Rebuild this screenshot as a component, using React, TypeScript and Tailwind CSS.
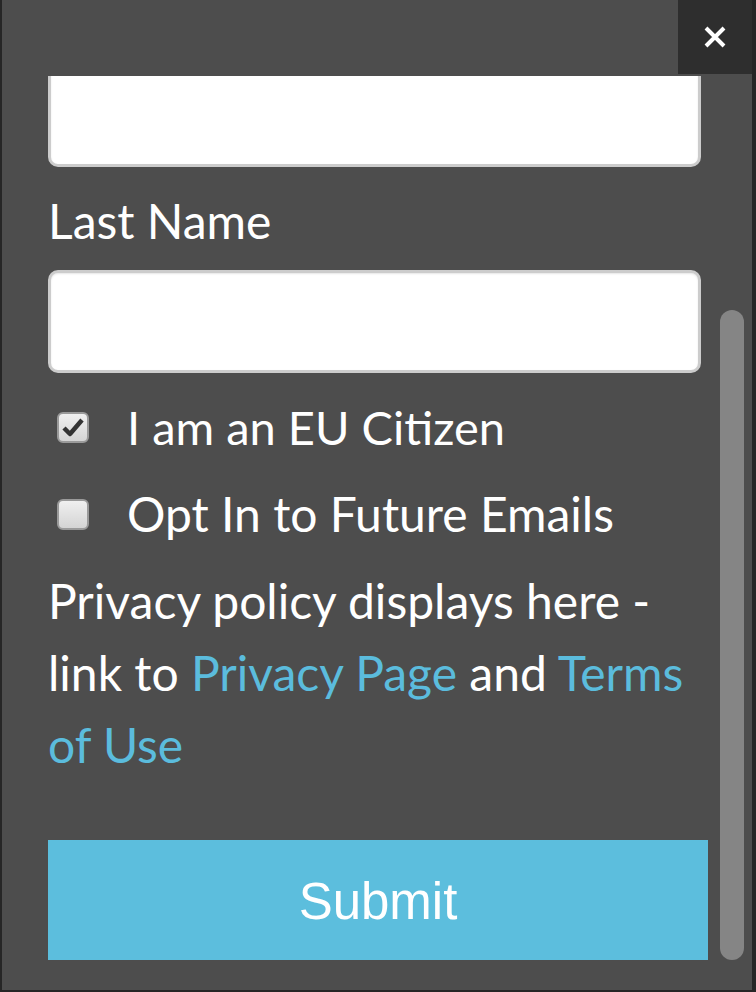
import { useState } from 'react';

function Checkbox({ checked }: { checked: boolean }) {
  return (
    <span className="ml-[9px] flex h-[31px] w-[32px] shrink-0 items-center justify-center rounded-[6px] border-[2px] border-[#9a9a9a] bg-gradient-to-b from-[#f0f0f0] to-[#d4d4d4]">
      {checked && (
        <svg width="22" height="20" viewBox="0 0 22 20">
          <path d="M2 11 L8 17 L20 3" fill="none" stroke="#333" strokeWidth="4.5" strokeLinejoin="round" />
        </svg>
      )}
    </span>
  );
}

export default function App() {
  const [eu, setEu] = useState(true);
  const [optIn, setOptIn] = useState(false);

  return (
    <div className="h-[992px] w-[756px] bg-[#262626] pb-[2px] pl-[2px] pr-[4px]" style={{ fontFamily: 'Lato, "Open Sans", sans-serif' }}>
      <div className="relative flex h-full flex-col bg-[#4d4d4d]">
        <div className="h-[76px] shrink-0" />
        <button className="absolute right-0 top-0 flex h-[74px] w-[74px] items-center justify-center bg-[#2e2e2e]">
          <svg width="22" height="22" viewBox="0 0 22 22">
            <path d="M2 2 L20 20 M20 2 L2 20" stroke="#fff" strokeWidth="4" />
          </svg>
        </button>

        <div className="flex min-h-0 flex-1 overflow-hidden">
          <div className="flex flex-1 flex-col pl-[46px] text-white">
            <div className="-mt-[12px] h-[103px] w-[653px] shrink-0 rounded-[10px] border-[3px] border-[#cccccc] bg-white shadow-[inset_0_1px_2px_rgba(0,0,0,0.1)]" />

            <label className="mt-[18px] text-[48px] leading-[72px]">Last Name</label>
            <div className="mt-[13px] h-[103px] w-[653px] shrink-0 rounded-[10px] border-[3px] border-[#cccccc] bg-white shadow-[inset_0_1px_2px_rgba(0,0,0,0.1)]" />

            <div className="mt-[18px] flex items-center text-[47px] leading-[72px]" onClick={() => setEu(!eu)}>
              <Checkbox checked={eu} />
              <span className="ml-[38px]">I am an EU Citizen</span>
            </div>
            <div className="mt-[15px] flex items-center text-[48px] leading-[72px]" onClick={() => setOptIn(!optIn)}>
              <Checkbox checked={optIn} />
              <span className="ml-[38px]">Opt In to Future Emails</span>
            </div>

            <p className="mt-[15px] w-[660px] text-[48px] leading-[72px]">
              Privacy policy displays here - link to <a className="text-[#5bbcdd]">Privacy Page</a> and{' '}
              <a className="text-[#5bbcdd]">Terms of Use</a>
            </p>

            <button
              className="mt-[59px] h-[120px] w-[660px] shrink-0 bg-[#5cbedd] pt-[4px] text-[51px] text-white"
              style={{ fontFamily: '"Liberation Sans", Arial, sans-serif' }}
            >
              Submit
            </button>
          </div>

          <div className="mr-[8px] flex w-[24px] shrink-0 flex-col pb-[30px] pt-[234px]">
            <div className="flex-1 rounded-full bg-[#858585]" />
          </div>
        </div>
      </div>
    </div>
  );
}
